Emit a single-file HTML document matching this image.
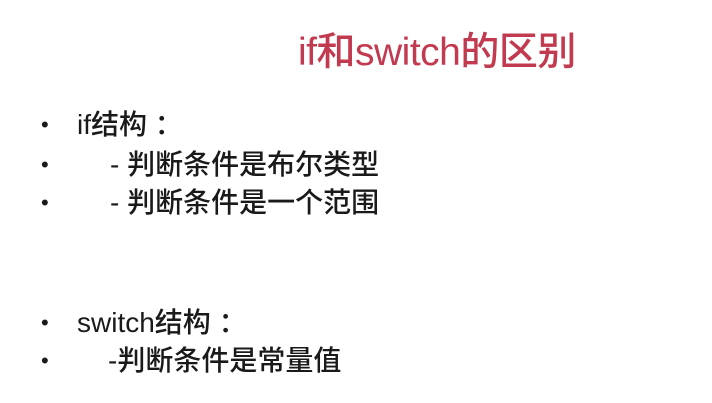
<!DOCTYPE html>
<html><head><meta charset="utf-8"><style>
body{margin:0;width:712px;height:403px;background:#fff;overflow:hidden;position:relative;font-family:"Liberation Sans","Noto Sans CJK SC",sans-serif;color:#1a1a1a}
.t{position:absolute;left:298px;top:33px;font-size:39px;line-height:40px;color:#c23a50;white-space:nowrap;letter-spacing:-0.5px;font-weight:500}
.l{position:absolute;left:0;font-size:28px;white-space:nowrap;line-height:30px;font-weight:500}
.b{position:absolute;left:41px;font-size:22px}
</style></head><body>
<div class="t">if和switch的区别</div>
<div class="l" style="top:110px"><span class="b">•</span><span style="position:absolute;left:77px">if结构 ：</span></div>
<div class="l" style="top:150px"><span class="b">•</span><span style="position:absolute;left:110px">- 判断条件是布尔类型</span></div>
<div class="l" style="top:188px"><span class="b">•</span><span style="position:absolute;left:110px">- 判断条件是一个范围</span></div>
<div class="l" style="top:308px"><span class="b">•</span><span style="position:absolute;left:77px">switch结构 ：</span></div>
<div class="l" style="top:346px"><span class="b">•</span><span style="position:absolute;left:108px">-判断条件是常量值</span></div>
</body></html>
